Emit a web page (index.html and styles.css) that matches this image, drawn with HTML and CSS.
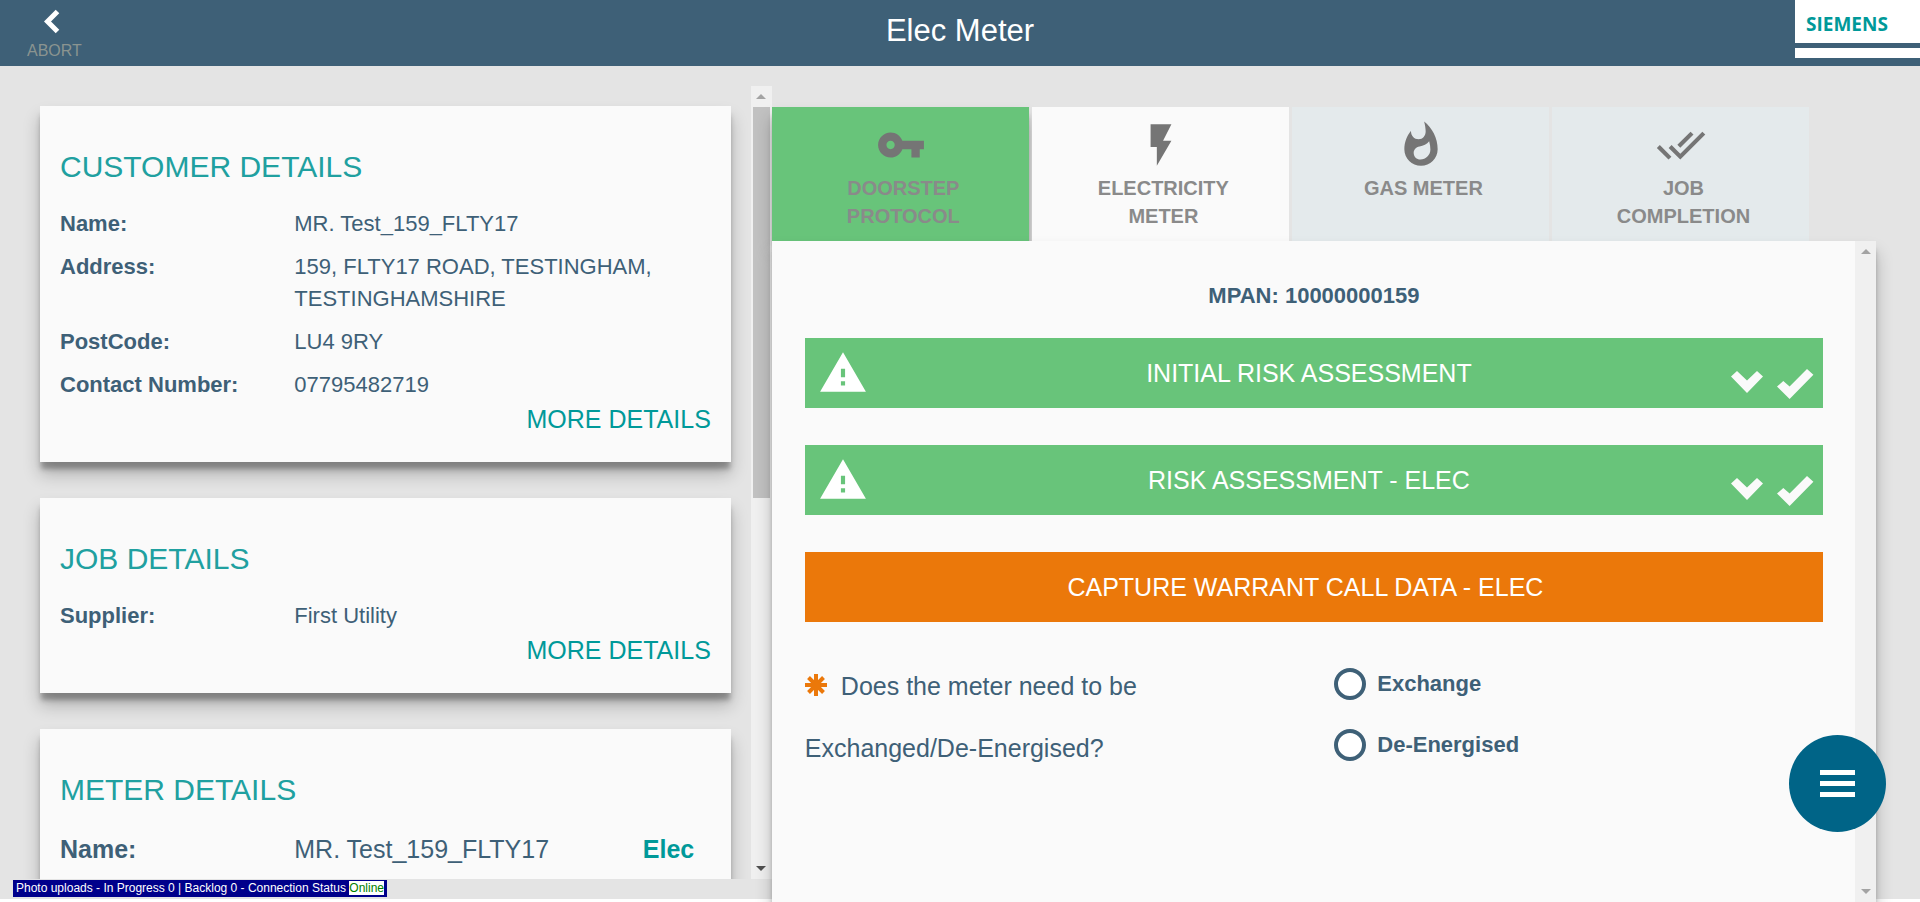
FILE: index.html
```html
<!DOCTYPE html>
<html lang="en">
<head>
<meta charset="utf-8">
<title>Elec Meter</title>
<link rel="stylesheet" href="styles.css">
</head>
<body>
<header class="topbar">
  <button class="abort" type="button">
    <svg class="abort-icon" viewBox="0 0 16 25" aria-hidden="true"><path d="M13.5 2.5 3.5 12.5l10 10" fill="none" stroke="#fff" stroke-width="5"/></svg>
    <span>ABORT</span>
  </button>
  <h1 class="title">Elec Meter</h1>
  <div class="brand">
    <div class="brand-name">SIEMENS</div>
    <div class="brand-strip"></div>
  </div>
</header>

<main class="main">
  <aside class="side">
    <div class="cards">
      <section class="card">
        <h2 class="card-title">CUSTOMER DETAILS</h2>
        <dl class="facts">
          <dt>Name:</dt><dd>MR. Test_159_FLTY17</dd>
          <dt>Address:</dt><dd>159, FLTY17 ROAD, TESTINGHAM, TESTINGHAMSHIRE</dd>
          <dt>PostCode:</dt><dd>LU4 9RY</dd>
          <dt>Contact Number:</dt><dd>07795482719</dd>
        </dl>
        <a class="more" href="#customer">MORE DETAILS</a>
      </section>
      <section class="card">
        <h2 class="card-title">JOB DETAILS</h2>
        <dl class="facts">
          <dt>Supplier:</dt><dd>First Utility</dd>
        </dl>
        <a class="more" href="#job">MORE DETAILS</a>
      </section>
      <section class="card">
        <h2 class="card-title">METER DETAILS</h2>
        <dl class="facts facts-meter">
          <dt>Name:</dt><dd>MR. Test_159_FLTY17</dd><dd class="fuel">Elec</dd>
        </dl>
      </section>
    </div>
    <div class="scrollbar" aria-hidden="true">
      <span class="arrow arrow-up"></span>
      <span class="thumb"></span>
      <span class="arrow arrow-down arrow-active"></span>
    </div>
  </aside>

  <div class="work">
    <nav class="tabs">
      <button class="tab tab-done" type="button">
        <svg class="tab-icon" viewBox="0 0 24 24" aria-hidden="true"><path d="M12.65 10C11.83 7.67 9.61 6 7 6c-3.31 0-6 2.69-6 6s2.69 6 6 6c2.61 0 4.83-1.67 5.65-4H17v4h4v-4h2v-4H12.65zM7 14c-1.1 0-2-.9-2-2s.9-2 2-2 2 .9 2 2-.9 2-2 2z"/></svg>
        <span class="tab-label">DOORSTEP<br>PROTOCOL</span>
      </button>
      <button class="tab tab-current" type="button">
        <svg class="tab-icon" viewBox="0 0 24 24" aria-hidden="true"><path d="M7 2v11h3v9l7-12h-4l4-8z"/></svg>
        <span class="tab-label">ELECTRICITY<br>METER</span>
      </button>
      <button class="tab" type="button">
        <svg class="tab-icon" viewBox="0 0 24 24" aria-hidden="true"><path d="M13.5.67s.74 2.65.74 4.8c0 2.06-1.35 3.73-3.41 3.73-2.07 0-3.63-1.67-3.63-3.73l.03-.36C5.21 7.51 4 10.62 4 14c0 4.42 3.58 8 8 8s8-3.58 8-8C20 8.61 17.41 3.8 13.5.67zM11.71 19c-1.78 0-3.22-1.4-3.22-3.14 0-1.62 1.05-2.76 2.81-3.12 1.77-.36 3.6-1.21 4.62-2.58.39 1.29.59 2.65.59 4.04 0 2.65-2.15 4.8-4.8 4.8z"/></svg>
        <span class="tab-label">GAS METER</span>
      </button>
      <button class="tab" type="button">
        <svg class="tab-icon" viewBox="0 0 24 24" aria-hidden="true"><path d="M18 7l-1.41-1.41-6.34 6.34 1.41 1.41L18 7zm4.24-1.41L11.66 16.17 7.48 12l-1.41 1.41L11.66 19l12-12-1.42-1.41zM.41 13.41L6 19l1.41-1.41L1.83 12 .41 13.41z"/></svg>
        <span class="tab-label">JOB<br>COMPLETION</span>
      </button>
    </nav>

    <section class="panel">
      <div class="panel-body">
        <h2 class="mpan">MPAN: 10000000159</h2>
        <div class="steps">
          <button class="step" type="button">
            <svg class="warn" viewBox="0 0 24 24" aria-hidden="true"><path d="M1 21h22L12 2 1 21zm12-3h-2v-2h2v2zm0-4h-2v-4h2v4z"/></svg>
            <span>INITIAL RISK ASSESSMENT</span>
            <svg class="marks" viewBox="0 0 83 30" aria-hidden="true"><path d="M0 7.500 6 2l10 9.500L26 2l6 5.500L16 24z"/><path d="M46 17.500 52.300 12l6.300 5.500L76 0l6.400 5.700L58.600 30z"/></svg>
          </button>
          <button class="step" type="button">
            <svg class="warn" viewBox="0 0 24 24" aria-hidden="true"><path d="M1 21h22L12 2 1 21zm12-3h-2v-2h2v2zm0-4h-2v-4h2v4z"/></svg>
            <span>RISK ASSESSMENT - ELEC</span>
            <svg class="marks" viewBox="0 0 83 30" aria-hidden="true"><path d="M0 7.500 6 2l10 9.500L26 2l6 5.500L16 24z"/><path d="M46 17.500 52.300 12l6.300 5.500L76 0l6.400 5.700L58.600 30z"/></svg>
          </button>
          <button class="step step-todo" type="button">CAPTURE WARRANT CALL DATA - ELEC</button>
        </div>
        <div class="question" role="radiogroup" aria-labelledby="question-text">
          <p class="question-text" id="question-text"><svg class="required" viewBox="0 0 22 22" aria-hidden="true"><path d="M11 0v22M0 11h22M3.500 3.500l15 15M18.500 3.500l-15 15" stroke="#eb780a" stroke-width="4" fill="none"/></svg>Does the meter need to be Exchanged/De-Energised?</p>
          <div class="options">
            <label class="option"><input class="radio" type="radio" name="action">Exchange</label>
            <label class="option"><input class="radio" type="radio" name="action">De-Energised</label>
          </div>
        </div>
      </div>
      <div class="scrollbar" aria-hidden="true">
        <span class="arrow arrow-up"></span>
        <span class="arrow arrow-down"></span>
      </div>
    </section>
  </div>
</main>

<div class="status">Photo uploads - In Progress 0 | Backlog 0 - Connection Status <span class="online">Online</span></div>

<button class="fab" type="button" aria-label="Menu">
  <svg class="fab-icon" viewBox="0 0 35 28" aria-hidden="true"><path d="M0 0h35v5H0zM0 11h35v5H0zM0 22h35v5H0z" fill="#fff"/></svg>
</button>
</body>
</html>
```
FILE: styles.css
```css
* {
  box-sizing: border-box;
}

:root {
  --slate: #3e6077;
  --teal: #009999;
  --paper: #fafafa;
  --grey: #e4e4e4;
  --green: #68c47a;
  --shadow: 0 8px 5px -1px rgba(0, 0, 0, 0.28), 0 12px 16px rgba(0, 0, 0, 0.24);
}

body {
  margin: 0;
  height: 100vh;
  display: flex;
  flex-direction: column;
  overflow: hidden;
  padding-bottom: 3px;
  background: #fff;
  color: var(--slate);
  font-family: "Liberation Sans", Arial, sans-serif;
  font-size: 22px;
  line-height: 32px;
}

h1, h2, p, dl, dd {
  margin: 0;
  font-weight: normal;
}

button {
  border: 0;
  padding: 0;
  font-family: inherit;
  cursor: pointer;
}

/* Top bar */
.topbar {
  flex: none;
  display: grid;
  grid-template-columns: 1fr auto 1fr;
  height: 66px;
  background: var(--slate);
}

.abort {
  justify-self: start;
  display: flex;
  flex-direction: column;
  align-items: center;
  gap: 8px;
  margin-left: 27px;
  padding-top: 9px;
  background: none;
  color: #8a9490;
  font-size: 16px;
  line-height: 18px;
}

.abort-icon {
  width: 16px;
  height: 25px;
  margin-right: 4px;
}

.title {
  color: #fff;
  font-size: 31px;
  line-height: 62px;
}

.brand {
  justify-self: end;
  width: 125px;
  display: flex;
  flex-direction: column;
  gap: 5px;
}

.brand-name {
  height: 43px;
  padding: 5px 0 0 11px;
  background: #fff;
  color: var(--teal);
  font: bold 19px/38px "Open Sans", sans-serif;
}

.brand-strip {
  height: 10px;
  background: #fff;
}

/* Page columns */
.main {
  flex: 1;
  min-height: 0;
  display: flex;
  background: var(--grey);
}

.side {
  flex: 0 0 40.2%;
  display: flex;
  margin: 20px 0;
  overflow: hidden;
}

.cards {
  flex: 1;
  display: flex;
  flex-direction: column;
  gap: 36px;
  padding: 20px 20px 0 40px;
}

.card {
  flex: none;
  padding: 45px 20px 25px;
  background: var(--paper);
  box-shadow: var(--shadow);
}

.card-title {
  margin-bottom: 25px;
  color: #20a0a0;
  font-size: 30px;
  line-height: 32px;
}

.facts {
  display: grid;
  grid-template-columns: 36% 1fr;
  row-gap: 11px;
}

.facts dt {
  font-weight: bold;
}

.facts-meter {
  grid-template-columns: 36% 1fr 68px;
  font-size: 25px;
  line-height: 36px;
}

.fuel {
  color: var(--teal);
  font-weight: bold;
}

.more {
  display: block;
  text-align: right;
  color: var(--teal);
  font-size: 25px;
  line-height: 36px;
  text-decoration: none;
}

/* Scroll bars */
.scrollbar {
  flex: none;
  width: 21px;
  display: flex;
  flex-direction: column;
  align-items: center;
  background: #f0f0f0;
}

.arrow {
  flex: none;
  height: 21px;
  display: flex;
  align-items: center;
}

.arrow::before {
  content: "";
  border: 5px solid transparent;
}

.arrow-up::before {
  border-top: 0;
  border-bottom-color: #a3a3a3;
}

.arrow-down {
  margin-top: auto;
}

.arrow-down::before {
  border-bottom: 0;
  border-top-color: #a3a3a3;
}

.arrow-active::before {
  border-top-color: #505050;
}

.thumb {
  width: 17px;
  height: 49.3%;
  background: #c1c1c1;
}

/* Work area */
.work {
  flex: 1;
  min-width: 0;
  display: flex;
  flex-direction: column;
  margin: 41px 44px -3px 0;
}

.tabs {
  flex: none;
  display: grid;
  grid-template-columns: repeat(4, 1fr);
  gap: 3px;
  padding-right: 67px;
}

.tab {
  display: flex;
  flex-direction: column;
  align-items: center;
  gap: 4px;
  height: 134px;
  padding-top: 13px;
  background: #e4eaec;
  color: #8a8a8a;
  font-size: 20px;
  font-weight: bold;
  line-height: 28px;
}

.tab-done {
  background: var(--green);
  box-shadow: var(--shadow);
}

.tab-current {
  background: var(--paper);
}

.tab-icon {
  width: 50px;
  height: 50px;
  margin-left: 2px;
  fill: #757575;
}

.tab-label {
  padding-left: 6px;
}

.panel {
  position: relative;
  flex: 1;
  min-height: 0;
  display: flex;
  background: var(--paper);
  box-shadow: var(--shadow);
}

.panel-body {
  flex: 1;
  padding: 39px 32px 0 33px;
}

.mpan {
  margin-bottom: 26px;
  text-align: center;
  font-size: 22px;
  font-weight: bold;
}

.steps {
  display: flex;
  flex-direction: column;
  gap: 37px;
}

.step {
  display: grid;
  grid-template-columns: 91px 1fr 92px;
  align-items: center;
  height: 70px;
  padding: 0 9px 0 0;
  background: var(--green);
  color: #fff;
  font-size: 25px;
}

.step-todo {
  display: block;
  padding-right: 17px;
  background: #eb780a;
}

.warn {
  width: 50px;
  height: 50px;
  margin-left: 13px;
  fill: #fff;
}

.marks {
  justify-self: end;
  width: 83px;
  height: 30px;
  margin-top: 22px;
  fill: var(--paper);
}

.question {
  display: grid;
  grid-template-columns: 52% 1fr;
  align-items: start;
  padding-top: 33px;
}

.question-text {
  padding-right: 20%;
  font-size: 25px;
  line-height: 62px;
}

.required {
  width: 22px;
  height: 22px;
  margin-right: 14px;
  vertical-align: -1px;
}

.options {
  display: flex;
  flex-direction: column;
  align-items: start;
  gap: 29px;
  padding-top: 13px;
}

.option {
  display: flex;
  align-items: center;
  gap: 11px;
  font-weight: bold;
}

.radio {
  appearance: none;
  width: 32px;
  height: 32px;
  margin: 0;
  border: 4px solid var(--slate);
  border-radius: 50%;
  background: #fff;
}

/* Overlays */
.status {
  position: fixed;
  left: 13px;
  bottom: 5px;
  padding: 1px 3px;
  background: #00008b;
  color: #fff;
  font-size: 12px;
  line-height: 15px;
}

.online {
  background: #fff;
  color: #008000;
}

.fab {
  position: fixed;
  right: 34px;
  bottom: 70px;
  width: 97px;
  height: 97px;
  display: flex;
  align-items: center;
  justify-content: center;
  border-radius: 50%;
  background: #006487;
}

.fab-icon {
  width: 35px;
  height: 28px;
}
```
